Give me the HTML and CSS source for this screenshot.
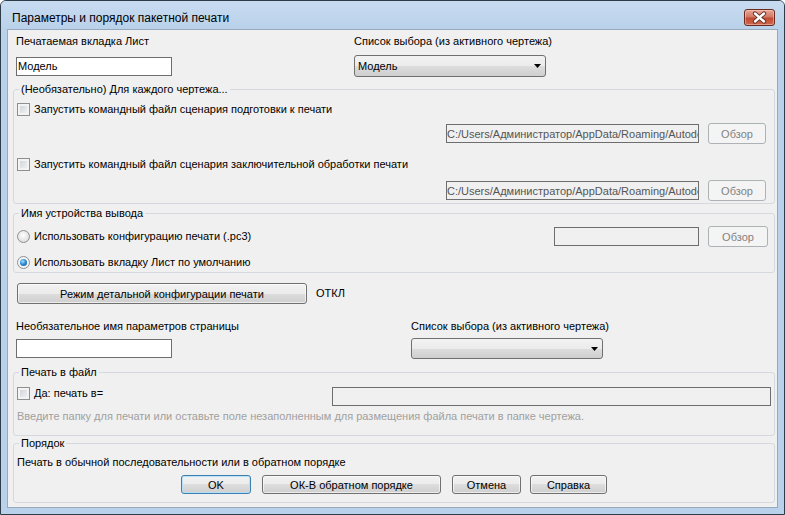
FILE: index.html
```html
<!DOCTYPE html>
<html lang="ru">
<head>
    <meta charset="UTF-8">
    <title>Параметры и порядок пакетной печати</title>
    <link rel="stylesheet" href="styles.css">
</head>
<body>
    <div class="window">
        <div class="titlebar">
            <span class="title">Параметры и порядок пакетной печати</span>
            <div class="close">
                <svg width="29" height="15" viewBox="0 0 29 15">
                    <path d="M10 3.5 L19 11.5 M19 3.5 L10 11.5" stroke="#5a2a22" stroke-width="4.2" stroke-linecap="round"/>
                    <path d="M10 3.5 L19 11.5 M19 3.5 L10 11.5" stroke="#ffffff" stroke-width="2.4" stroke-linecap="round"/>
                </svg>
            </div>
        </div>

        <div class="client">
            <!-- вкладка листа -->
            <div class="row labels">
                <div class="col-a">Печатаемая вкладка Лист</div>
                <div>Список выбора (из активного чертежа)</div>
            </div>
            <div class="row fields">
                <div class="col-a"><input class="text" type="text" value="Модель"></div>
                <div class="combo"><span>Модель</span><svg width="7" height="4"><polygon points="0,0 7,0 3.5,4" fill="#000"/></svg></div>
            </div>

            <!-- сценарии -->
            <fieldset class="group g-scripts">
                <legend>(Необязательно) Для каждого чертежа...</legend>
                <div class="check first"><span class="box"></span><span class="lbl">Запустить командный файл сценария подготовки к печати</span></div>
                <div class="path-row">
                    <input class="text path" type="text" value="C:/Users/Администратор/AppData/Roaming/Autodesk/Scripts/pre.scr" readonly>
                    <button class="btn" disabled>Обзор</button>
                </div>
                <div class="check second"><span class="box"></span><span class="lbl">Запустить командный файл сценария заключительной обработки печати</span></div>
                <div class="path-row last">
                    <input class="text path" type="text" value="C:/Users/Администратор/AppData/Roaming/Autodesk/Scripts/post.scr" readonly>
                    <button class="btn" disabled>Обзор</button>
                </div>
            </fieldset>

            <!-- устройство -->
            <fieldset class="group g-device">
                <legend>Имя устройства вывода</legend>
                <div class="radio-row">
                    <span class="radio"></span><span class="lbl">Использовать конфигурацию печати (.pc3)</span>
                    <input class="text pc3" type="text" readonly>
                    <button class="btn wide" disabled>Обзор</button>
                </div>
                <div class="radio-row second">
                    <span class="radio on"></span><span class="lbl">Использовать вкладку Лист по умолчанию</span>
                </div>
            </fieldset>

            <div class="row detail">
                <button class="btn detail-btn">Режим детальной конфигурации печати</button>
                <span class="state">ОТКЛ</span>
            </div>

            <div class="row labels second">
                <div class="col-b">Необязательное имя параметров страницы</div>
                <div>Список выбора (из активного чертежа)</div>
            </div>
            <div class="row fields second">
                <div class="col-b"><input class="text" type="text" value=""></div>
                <div class="combo"><span></span><svg width="7" height="4"><polygon points="0,0 7,0 3.5,4" fill="#000"/></svg></div>
            </div>

            <!-- печать в файл -->
            <fieldset class="group g-file">
                <legend>Печать в файл</legend>
                <div class="file-row">
                    <div class="check"><span class="box"></span><span class="lbl">Да: печать в=</span></div>
                    <input class="text file" type="text" readonly>
                </div>
                <div class="hint">Введите папку для печати или оставьте поле незаполненным для размещения файла печати в папке чертежа.</div>
            </fieldset>

            <!-- порядок -->
            <fieldset class="group g-order">
                <legend>Порядок</legend>
                <div class="order-text">Печать в обычной последовательности или в обратном порядке</div>
                <div class="buttons">
                    <button class="btn default b-ok">OK</button>
                    <button class="btn b-rev">ОК-В обратном порядке</button>
                    <button class="btn b-cancel">Отмена</button>
                    <button class="btn b-help">Справка</button>
                </div>
            </fieldset>
        </div>
    </div>
</body>
</html>
```

FILE: styles.css
```css
* {
    box-sizing: border-box;
}

body {
    margin: 0;
    background-color: #ffffff;
    font-family: "Liberation Sans", Arial, sans-serif;
    font-size: 11px;
    line-height: 13px;
    color: #000;
}

.window {
    width: 785px;
    height: 515px;
    border: 1px solid #2e3b48;
    border-radius: 6px 6px 0 0;
    background-color: #b9d1ea;
    padding: 0 6px 6px;
    display: flex;
    flex-direction: column;
}

.titlebar {
    height: 28px;
    margin: 0 -6px;
    padding: 0 9px 0 11px;
    display: flex;
    justify-content: space-between;
    align-items: flex-start;
    border-radius: 5px 5px 0 0;
    background: linear-gradient(#c8dcf1, #b9d1ea);
}

.title {
    margin-top: 10px;
    font-size: 12px;
    line-height: 15px;
    color: #000;
}

.close {
    margin-top: 8px;
    width: 31px;
    height: 17px;
    border: 1px solid #6b2a1e;
    border-radius: 3px;
    background: linear-gradient(#e9a696 0%, #d27a66 45%, #c04a31 55%, #cf6a50 100%);
    box-shadow: inset 0 0 0 1px rgba(255, 220, 210, 0.45);
}

.close svg {
    display: block;
}

.client {
    flex: 1;
    border: 1px solid #97a9bd;
    background-color: #f0f0f0;
}

.row {
    display: flex;
    padding-left: 8px;
}

.labels {
    padding-top: 5px;
    height: 18px;
}

.labels.second {
    padding-top: 0;
    margin-top: 16px;
    height: 13px;
}

.col-a {
    width: 338px;
}

.col-b {
    width: 395px;
}

.fields {
    margin-top: 7px;
    height: 22px;
    align-items: center;
}

.fields.second {
    margin-top: 5px;
    height: 21px;
}

.fields.second .combo {
    height: 21px;
}

.text {
    display: block;
    width: 156px;
    height: 19px;
    margin: 0;
    padding: 0 1px;
    border: 1px solid #6e6e6e;
    background-color: #ffffff;
    font-family: inherit;
    font-size: 11px;
    color: #000;
    outline: none;
}

.combo {
    width: 192px;
    height: 22px;
    padding: 0 4px 0 3px;
    display: flex;
    align-items: center;
    justify-content: space-between;
    border: 1px solid #707070;
    border-radius: 3px;
    background: linear-gradient(#f2f2f2 0%, #ebebeb 50%, #dddddd 50%, #cfcfcf 100%);
}

.combo svg {
    display: block;
}

/* group boxes */
.group {
    min-width: 0;
    margin: 0 2px 0 5px;
    border: 1px solid #d5d9dd;
    border-radius: 3px;
    padding: 0 8px 2px 3px;
}

.group legend {
    margin-left: 2px;
    padding: 0 2px;
    line-height: 13px;
}

.g-scripts {
    margin-top: 6px;
}

.g-device {
    margin-top: 3px;
    padding: 0 6px 3px 3px;
}

.g-file {
    margin-top: 7px;
    padding: 0 3px 12px 3px;
}

.g-order {
    margin-top: 1px;
    padding: 0 3px 8px 3px;
}

.check,
.radio-row {
    display: flex;
    align-items: center;
    height: 13px;
}

.check.first {
    margin-top: 7px;
}

.check.second {
    margin-top: 14px;
}

.box {
    width: 13px;
    height: 13px;
    flex-shrink: 0;
    border: 1px solid #8e8f8f;
    background: linear-gradient(135deg, #cbcfd5, #f6f6f6);
    box-shadow: inset 0 0 0 2px #f3f3f3;
}

.lbl {
    margin-left: 4px;
    white-space: nowrap;
}

.path-row {
    margin-top: 7px;
    height: 21px;
    display: flex;
    justify-content: flex-end;
    align-items: center;
}

.path-row.last {
    margin-top: 9px;
}

.path {
    width: 253px;
    padding: 0;
    background-color: #f0f0f0;
    color: #555;
}

.btn {
    height: 21px;
    margin: 0;
    padding: 0;
    border: 1px solid #707070;
    border-radius: 3px;
    background: linear-gradient(#f2f2f2 0%, #ebebeb 50%, #dddddd 50%, #cfcfcf 100%);
    box-shadow: inset 0 0 0 1px rgba(255, 255, 255, 0.6);
    font-family: inherit;
    font-size: 11px;
    color: #000;
}

.btn:disabled {
    border-color: #adb2b5;
    background: #f4f4f4;
    box-shadow: none;
    color: #838383;
}

.path-row .btn {
    width: 58px;
    margin-left: 9px;
}

.radio-row {
    margin-top: 6px;
    height: 21px;
}

.radio-row.second {
    margin-top: 9px;
    height: 13px;
}

.radio {
    position: relative;
    width: 13px;
    height: 13px;
    flex-shrink: 0;
    border: 1px solid #8e8f8f;
    border-radius: 50%;
    background: radial-gradient(circle at 45% 40%, #ffffff 0%, #e4e4e4 60%, #cfcfcf 100%);
}

.radio.on {
    background: #f4f4f4;
}

.radio.on::after {
    content: "";
    position: absolute;
    left: 2px;
    top: 2px;
    width: 7px;
    height: 7px;
    border-radius: 50%;
    background: radial-gradient(circle at 40% 35%, #a9e0ff 0%, #2f8fd8 45%, #0f4d8f 100%);
}

.pc3 {
    width: 145px;
    margin-left: auto;
    background-color: #f0f0f0;
}

.btn.wide {
    width: 60px;
    margin-left: 9px;
}

.detail {
    margin-top: 10px;
    padding-left: 9px;
    height: 21px;
    align-items: center;
}

.detail-btn {
    width: 290px;
}

.state {
    margin-left: 9px;
}

.file-row {
    margin-top: 8px;
    height: 19px;
    display: flex;
}

.file-row .check {
    height: 13px;
}

.file {
    width: 439px;
    margin-left: auto;
    background-color: #f0f0f0;
}

.hint {
    margin-top: 4px;
    color: #a0a0a0;
    white-space: nowrap;
}

.order-text {
    margin-top: 6px;
}

.buttons {
    margin-top: 6px;
    padding-left: 164px;
    display: flex;
}

.buttons .btn {
    height: 19px;
}

.btn.default {
    border-color: #3c7fb1;
    box-shadow: inset 0 0 0 1px rgba(180, 225, 250, 0.9);
}

.b-ok {
    width: 70px;
}

.b-rev {
    width: 179px;
    margin-left: 11px;
}

.b-cancel {
    width: 69px;
    margin-left: 11px;
}

.b-help {
    width: 77px;
    margin-left: 9px;
}
```
